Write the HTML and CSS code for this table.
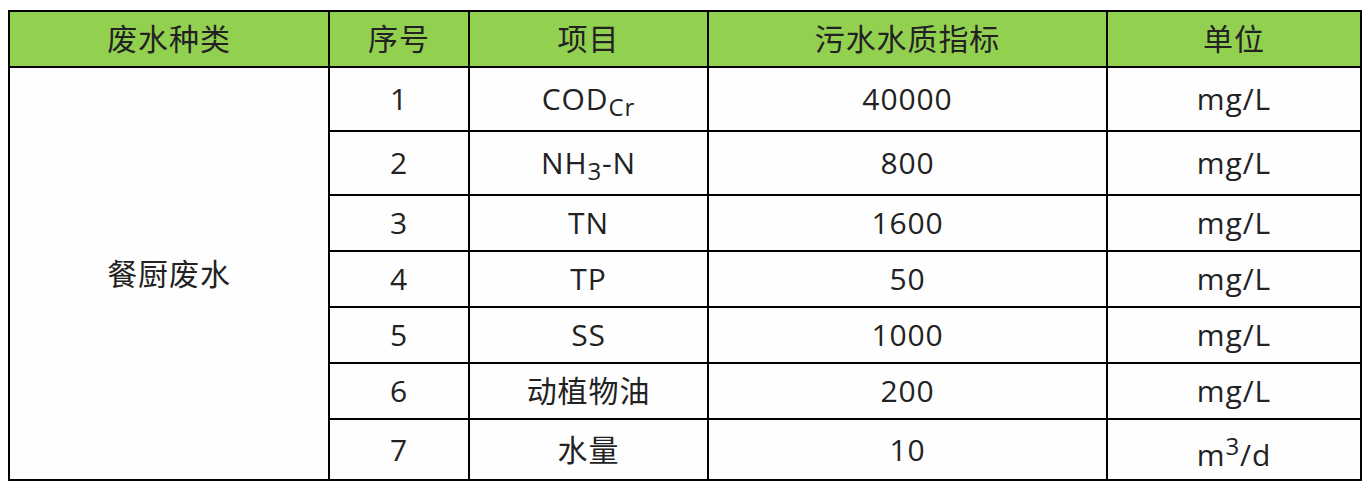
FILE: index.html
```html
<!DOCTYPE html>
<html lang="zh">
<head>
<meta charset="utf-8">
<link rel="stylesheet" href="styles.css">
</head>
<body>
<table class="data">
  <colgroup>
    <col class="c1"><col class="c2"><col class="c3"><col class="c4"><col class="c5">
  </colgroup>
  <thead>
    <tr class="r-head">
      <th>废水种类</th><th>序号</th><th>项目</th><th>污水水质指标</th><th>单位</th>
    </tr>
  </thead>
  <tbody>
    <tr class="r-tall">
      <td rowspan="7" class="kind">餐厨废水</td>
      <td>1</td><td>COD<sub>Cr</sub></td><td>40000</td><td>mg/L</td>
    </tr>
    <tr class="r-tall"><td>2</td><td>NH<sub>3</sub>-N</td><td>800</td><td>mg/L</td></tr>
    <tr class="r-std"><td>3</td><td>TN</td><td>1600</td><td>mg/L</td></tr>
    <tr class="r-std"><td>4</td><td>TP</td><td>50</td><td>mg/L</td></tr>
    <tr class="r-std"><td>5</td><td>SS</td><td>1000</td><td>mg/L</td></tr>
    <tr class="r-std"><td>6</td><td>动植物油</td><td>200</td><td>mg/L</td></tr>
    <tr class="r-last"><td>7</td><td>水量</td><td>10</td><td>m<sup>3</sup>/d</td></tr>
  </tbody>
</table>
</body>
</html>
```
FILE: styles.css
```css
html, body {
  background: #ffffff;
}
body {
  margin: 10px 0 0 8px;
  font-family: "Open Sans", "Noto Sans CJK SC", sans-serif;
  color: #222222;
}
.data {
  border-collapse: collapse;
  table-layout: fixed;
  width: 1354px;
  font-size: 30px;
  letter-spacing: 0.03em;
}
.c1 { width: 320px; }
.c2 { width: 140px; }
.c3 { width: 239px; }
.c4 { width: 399px; }
.c5 { width: 254px; }
.data th, .data td {
  border: 2px solid #000;
  padding: 0;
  text-align: center;
  vertical-align: middle;
  font-weight: normal;
  line-height: 1.2;
}
.data th {
  background: #92d050;
}
.data td {
  background: #fefefe;
}
.r-head { height: 56px; }
.r-tall { height: 64px; }
.r-std { height: 56px; }
.r-last { height: 61px; }
.data sub {
  font-size: 0.8em;
  vertical-align: -0.25em;
  line-height: 0;
}
.data sup {
  font-size: 0.8em;
  vertical-align: 0.45em;
  line-height: 0;
}
.r-last td:last-child {
  padding-top: 10px;
}
```
